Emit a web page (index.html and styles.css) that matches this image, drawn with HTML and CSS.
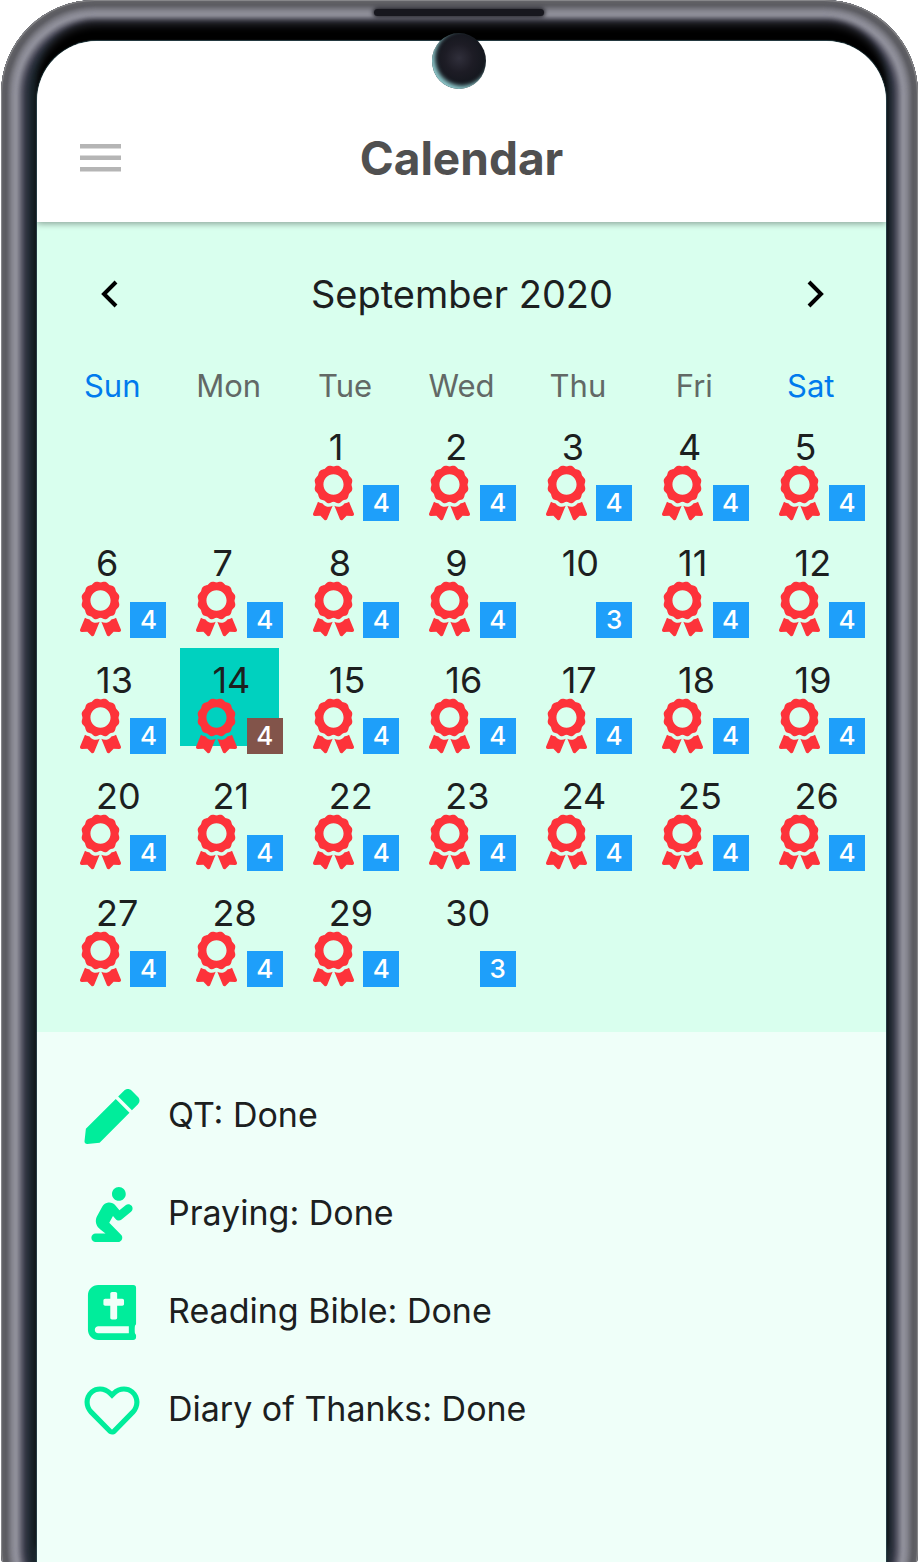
FILE: index.html
```html
<!DOCTYPE html>
<html lang="en">
<head>
<meta charset="utf-8">
<meta name="viewport" content="width=device-width, initial-scale=1">
<title>Calendar</title>
<link rel="stylesheet" href="styles.css">
</head>
<body>
<svg class="symbols" aria-hidden="true">
  <symbol id="award" viewBox="0 0 384 512"><path d="M97.12 362.63c-8.69-8.69-4.16-6.24-25.12-11.85-9.51-2.55-17.87-7.45-25.43-13.32L1.2 448.7c-4.39 10.77 3.81 22.47 15.43 22.03l52.69-2.01L105.56 507c8 8.44 22.04 5.81 26.43-4.96l52.05-127.62c-10.84 6.04-22.87 9.58-35.31 9.58-19.5 0-37.82-7.59-51.61-21.37zM382.8 448.7l-45.37-111.24c-7.56 5.88-15.92 10.77-25.43 13.32-21.07 5.64-16.45 3.18-25.12 11.85-13.79 13.78-32.12 21.37-51.62 21.37-12.44 0-24.47-3.55-35.31-9.58L252 502.04c4.39 10.77 18.44 13.4 26.43 4.96l36.25-38.28 52.69 2.01c11.62.44 19.82-11.27 15.43-22.03zM263 340c15.28-15.55 17.03-14.21 38.79-20.14 13.89-3.79 24.75-14.84 28.47-28.98 7.48-28.4 5.54-24.97 25.95-45.75 10.17-10.35 14.14-25.44 10.42-39.58-7.47-28.38-7.48-24.42 0-52.83 3.72-14.14-.25-29.23-10.42-39.58-20.41-20.78-18.47-17.36-25.95-45.75-3.72-14.14-14.58-25.19-28.47-28.98-27.88-7.61-24.52-5.62-44.95-26.41-10.17-10.35-25-14.4-38.89-10.61-27.87 7.6-23.98 7.61-51.9 0-13.89-3.79-28.72.25-38.89 10.61-20.41 20.78-17.05 18.8-44.94 26.41-13.89 3.79-24.75 14.84-28.47 28.98-7.47 28.39-5.54 24.97-25.95 45.75-10.17 10.35-14.15 25.44-10.42 39.58 7.47 28.36 7.48 24.4 0 52.82-3.72 14.14.25 29.23 10.42 39.59 20.41 20.78 18.47 17.35 25.95 45.75 3.72 14.14 14.58 25.19 28.47 28.98C104.6 325.96 106.27 325 121 340c13.23 13.47 33.84 15.88 49.74 5.82a39.676 39.676 0 0 1 42.53 0c15.89 10.06 36.5 7.65 49.73-5.82zM97.66 175.96c0-53.03 42.24-96.02 94.34-96.02s94.34 42.99 94.34 96.02-42.24 96.02-94.34 96.02-94.34-42.99-94.34-96.02z"/></symbol>
</svg>
<div class="phone">
  <span class="speaker"></span>
  <span class="camera"></span>
  <div class="screen">
    <header class="app-bar">
      <button class="menu" type="button" aria-label="Menu">
        <svg viewBox="0 0 41 28" aria-hidden="true"><path d="M0 0h41v4.500H0zM0 11.500h41v4.500H0zM0 23h41v4.500H0z"/></svg>
      </button>
      <h1 class="title">Calendar</h1>
    </header>
    <main>
      <section class="calendar">
        <div class="month-bar">
          <button class="arrow" type="button" aria-label="Previous month">
            <svg viewBox="0 0 20 28" aria-hidden="true"><path d="M17 2 5 14l12 12"/></svg>
          </button>
          <h2 class="month">September 2020</h2>
          <button class="arrow" type="button" aria-label="Next month">
            <svg viewBox="0 0 20 28" aria-hidden="true"><path d="m4 2 12 12L4 26"/></svg>
          </button>
        </div>
        <table class="days">
          <thead>
            <tr>
              <th class="weekend" scope="col">Sun</th><th scope="col">Mon</th><th scope="col">Tue</th><th scope="col">Wed</th><th scope="col">Thu</th><th scope="col">Fri</th><th class="weekend" scope="col">Sat</th>
            </tr>
          </thead>
          <tbody id="weeks"></tbody>
        </table>
      </section>
      <ul class="tasks">
        <li class="task">
          <svg class="task-icon" viewBox="0 0 512 512" aria-hidden="true"><path d="M290.74 93.24l128.02 128.02-277.99 277.99-114.14 12.6C11.35 513.54-1.56 500.62.14 485.34l12.7-114.22 277.9-277.88zm207.2-19.06l-60.11-60.11c-18.75-18.75-49.16-18.75-67.91 0l-56.55 56.55 128.02 128.02 56.55-56.55c18.75-18.76 18.75-49.16 0-67.91z"/></svg>
          <span>QT: Done</span>
        </li>
        <li class="task">
          <svg class="task-icon" viewBox="0 0 384 512" aria-hidden="true"><path d="M256 128c35.35 0 64-28.65 64-64S291.35 0 256 0s-64 28.65-64 64 28.65 64 64 64zm-30.63 169.75c14.06 16.72 39 19.09 55.97 5.22l88-72.02c17.09-13.98 19.59-39.19 5.62-56.28-13.97-17.11-39.19-19.59-56.31-5.62l-57.44 47-38.91-46.31c-15.44-18.39-39.22-27.92-64-25.33-24.19 2.48-45.25 16.27-56.37 36.92l-49.37 92.03c-23.4 43.64-8.69 96.37 34.19 123.75L131.56 432H40c-22.09 0-40 17.91-40 40s17.91 40 40 40h208c34.08 0 53.77-42.79 28.28-68.28L166.42 333.86l34.8-64.87 24.15 28.76z"/></svg>
          <span>Praying: Done</span>
        </li>
        <li class="task">
          <svg class="task-icon" viewBox="0 0 448 512" aria-hidden="true"><path d="M448 358.400V25.600c0-16-9.600-25.600-25.600-25.600H96C41.600 0 0 41.600 0 96v320c0 54.400 41.600 96 96 96h326.400c12.800 0 25.600-9.600 25.600-25.600v-16c0-6.400-3.200-12.800-9.600-19.200-3.200-16-3.200-60.800 0-73.600 6.400-3.200 9.600-9.600 9.600-19.200zM144 144c0-8.840 7.160-16 16-16h48V80c0-8.840 7.160-16 16-16h32c8.840 0 16 7.160 16 16v48h48c8.840 0 16 7.160 16 16v32c0 8.840-7.160 16-16 16h-48v112c0 8.840-7.160 16-16 16h-32c-8.840 0-16-7.160-16-16V192h-48c-8.840 0-16-7.160-16-16v-32zm236.800 304H96c-19.200 0-32-12.800-32-32s16-32 32-32h284.800v64z"/></svg>
          <span>Reading Bible: Done</span>
        </li>
        <li class="task">
          <svg class="task-icon" viewBox="0 0 512 512" aria-hidden="true"><path d="M458.4 64.3C400.6 15.7 311.3 23 256 79.3 200.7 23 111.4 15.600 53.600 64.3-21.600 127.6-10.600 230.8 43 285.5l175.4 178.7c10 10.2 23.4 15.9 37.6 15.9 14.3 0 27.6-5.6 37.6-15.8L469 285.6c53.5-54.7 64.7-157.9-10.600-221.3zm-23.600 187.5L259.4 430.5c-2.4 2.4-4.4 2.4-6.8 0L77.2 251.8c-36.5-37.2-43.9-107.6 7.3-150.7 38.9-32.7 98.9-27.8 136.5 10.5l35 35.7 35-35.7c37.8-38.5 97.8-43.2 136.5-10.600 51.1 43.1 43.5 113.9 7.3 150.8z"/></svg>
          <span>Diary of Thanks: Done</span>
        </li>
      </ul>
    </main>
  </div>
</div>
<script src="calendar.js"></script>
</body>
</html>
```
FILE: styles.css
```css
* {
  box-sizing: border-box;
}

body {
  margin: 0;
  background: #fff;
  color: #1c201f;
  font-family: Inter, "Liberation Sans", sans-serif;
}

button {
  padding: 0;
  border: 0;
  background: none;
  color: inherit;
  font: inherit;
}

.symbols {
  display: none;
}

/* Phone body */
.phone {
  position: relative;
  display: flex;
  min-height: 100vh;
  padding: 41px 32px 0 37px;
  overflow: hidden;
}

.phone::before {
  content: "";
  position: absolute;
  inset: 0 0 -80px 1px;
  border-radius: 94px;
  background: #1b262c;
  box-shadow:
    inset 0 0 1px 1px #8b8b8d,
    inset 0 0 2px 4px #5f5f64,
    inset 0 0 3px 7px #5c5c62,
    inset 0 0 3px 10px #75757d,
    inset 0 0 3px 13px #888892,
    inset 0 0 3px 17px #92929d,
    inset 0 0 3px 20px #747480,
    inset 0 0 3px 23px #51515f,
    inset 0 0 4px 26px #373a47,
    inset 0 0 4px 29px #242c36;
}

.speaker {
  position: absolute;
  z-index: 2;
  top: 9px;
  left: 50%;
  width: 170px;
  height: 7px;
  border-radius: 4px;
  background: #17171e;
  box-shadow: 0 0 4px 1px #17171e;
  transform: translateX(-50%);
}

.camera {
  position: absolute;
  z-index: 2;
  top: 33px;
  left: 50%;
  width: 54px;
  height: 56px;
  border-radius: 50%;
  background: radial-gradient(circle at 50% 45%, #302f3b 0, #1d1c25 35%, #11151b 75%, #0b1518 100%);
  box-shadow: inset 3px -3px 4px #8fc9cc;
  transform: translateX(-50%);
}

.screen {
  position: relative;
  flex: 1;
  min-width: 0;
  border-radius: 60px 60px 0 0;
  background: #effff9;
  box-shadow: 0 0 1px 1px #284047, 0 -14px 6px 0 #000, 0 -22px 6px -2px #1c1c20;
}

/* App bar */
.app-bar {
  position: relative;
  display: grid;
  grid-template-columns: 1fr auto 1fr;
  align-items: center;
  height: 181px;
  padding: 53px 43px 0;
  border-radius: 60px 60px 0 0;
  background: #fff;
  box-shadow: 0 2px 6px rgba(0, 0, 0, 0.35);
  clip-path: inset(0 0 -12px 0);
}

.menu svg {
  display: block;
  width: 41px;
  height: 28px;
  fill: #b5b5b5;
}

.title {
  margin: 0;
  color: #505050;
  font-size: 46px;
  font-weight: 700;
  line-height: 54px;
}

/* Month grid */
.calendar {
  padding: 0 17px 44px;
  background: #d9ffee;
}

.month-bar {
  display: flex;
  align-items: center;
  justify-content: space-between;
  height: 144px;
  padding: 0 44px 0 45px;
}

.arrow svg {
  display: block;
  width: 20px;
  height: 28px;
  fill: none;
  stroke: #000;
  stroke-width: 4;
}

.month {
  margin: 0;
  font-size: 38px;
  font-weight: 400;
  line-height: 48px;
}

.days {
  width: 100%;
  border-collapse: collapse;
  table-layout: fixed;
}

.days th {
  height: 40px;
  padding: 0;
  color: #626966;
  font-size: 31px;
  font-weight: 400;
  line-height: 40px;
}

.days .weekend {
  color: #007bed;
}

.days td {
  padding: 0;
}

.day {
  position: relative;
  display: flex;
  flex-direction: column;
  align-items: flex-start;
  width: 100%;
  aspect-ratio: 1;
  padding: 20px 0 0 26px;
  text-align: left;
}

.selected {
  background: linear-gradient(#00d1bf, #00d1bf) 10px 9px / calc(100% - 18px) calc(100% - 18px) no-repeat;
}

.number {
  height: 39px;
  padding-left: 16px;
  font-size: 36px;
  line-height: 42px;
}

.award {
  width: 41px;
  height: 56px;
  fill: #fd333a;
}

.count {
  position: absolute;
  right: 4px;
  bottom: 1px;
  width: 36px;
  height: 36px;
  background: #1e9ffa;
  color: #fff;
  font-size: 26px;
  font-weight: 500;
  line-height: 36px;
  text-align: center;
}

.selected .count {
  background: #82544a;
}

/* Daily tasks */
.tasks {
  margin: 0;
  padding: 35px 47px 0;
  list-style: none;
}

.task {
  display: flex;
  align-items: center;
  gap: 28px;
  height: 98px;
  font-size: 34px;
  line-height: 42px;
}

.task span {
  padding-bottom: 2px;
}

.task-icon {
  flex: none;
  width: 56px;
  height: 55px;
  fill: #00ed9b;
}
```
FILE: calendar.js
```js
const FIRST_WEEKDAY = 2;
const DAYS_IN_MONTH = 30;
const SELECTED = 14;
const THREE_DONE = [10, 30];

const weeks = document.getElementById("weeks");
let row;

for (let cell = 0; cell < 35; cell++) {
  if (cell % 7 === 0) row = weeks.insertRow();
  const td = row.insertCell();
  const date = cell - FIRST_WEEKDAY + 1;
  if (date < 1 || date > DAYS_IN_MONTH) continue;

  const partial = THREE_DONE.includes(date);
  const award = partial ? "" : '<svg class="award" aria-hidden="true"><use href="#award"/></svg>';
  const state = date === SELECTED ? " selected" : "";
  td.innerHTML =
    `<button class="day${state}" type="button">` +
    `<span class="number">${date}</span>${award}` +
    `<span class="count">${partial ? 3 : 4}</span></button>`;
}
```
